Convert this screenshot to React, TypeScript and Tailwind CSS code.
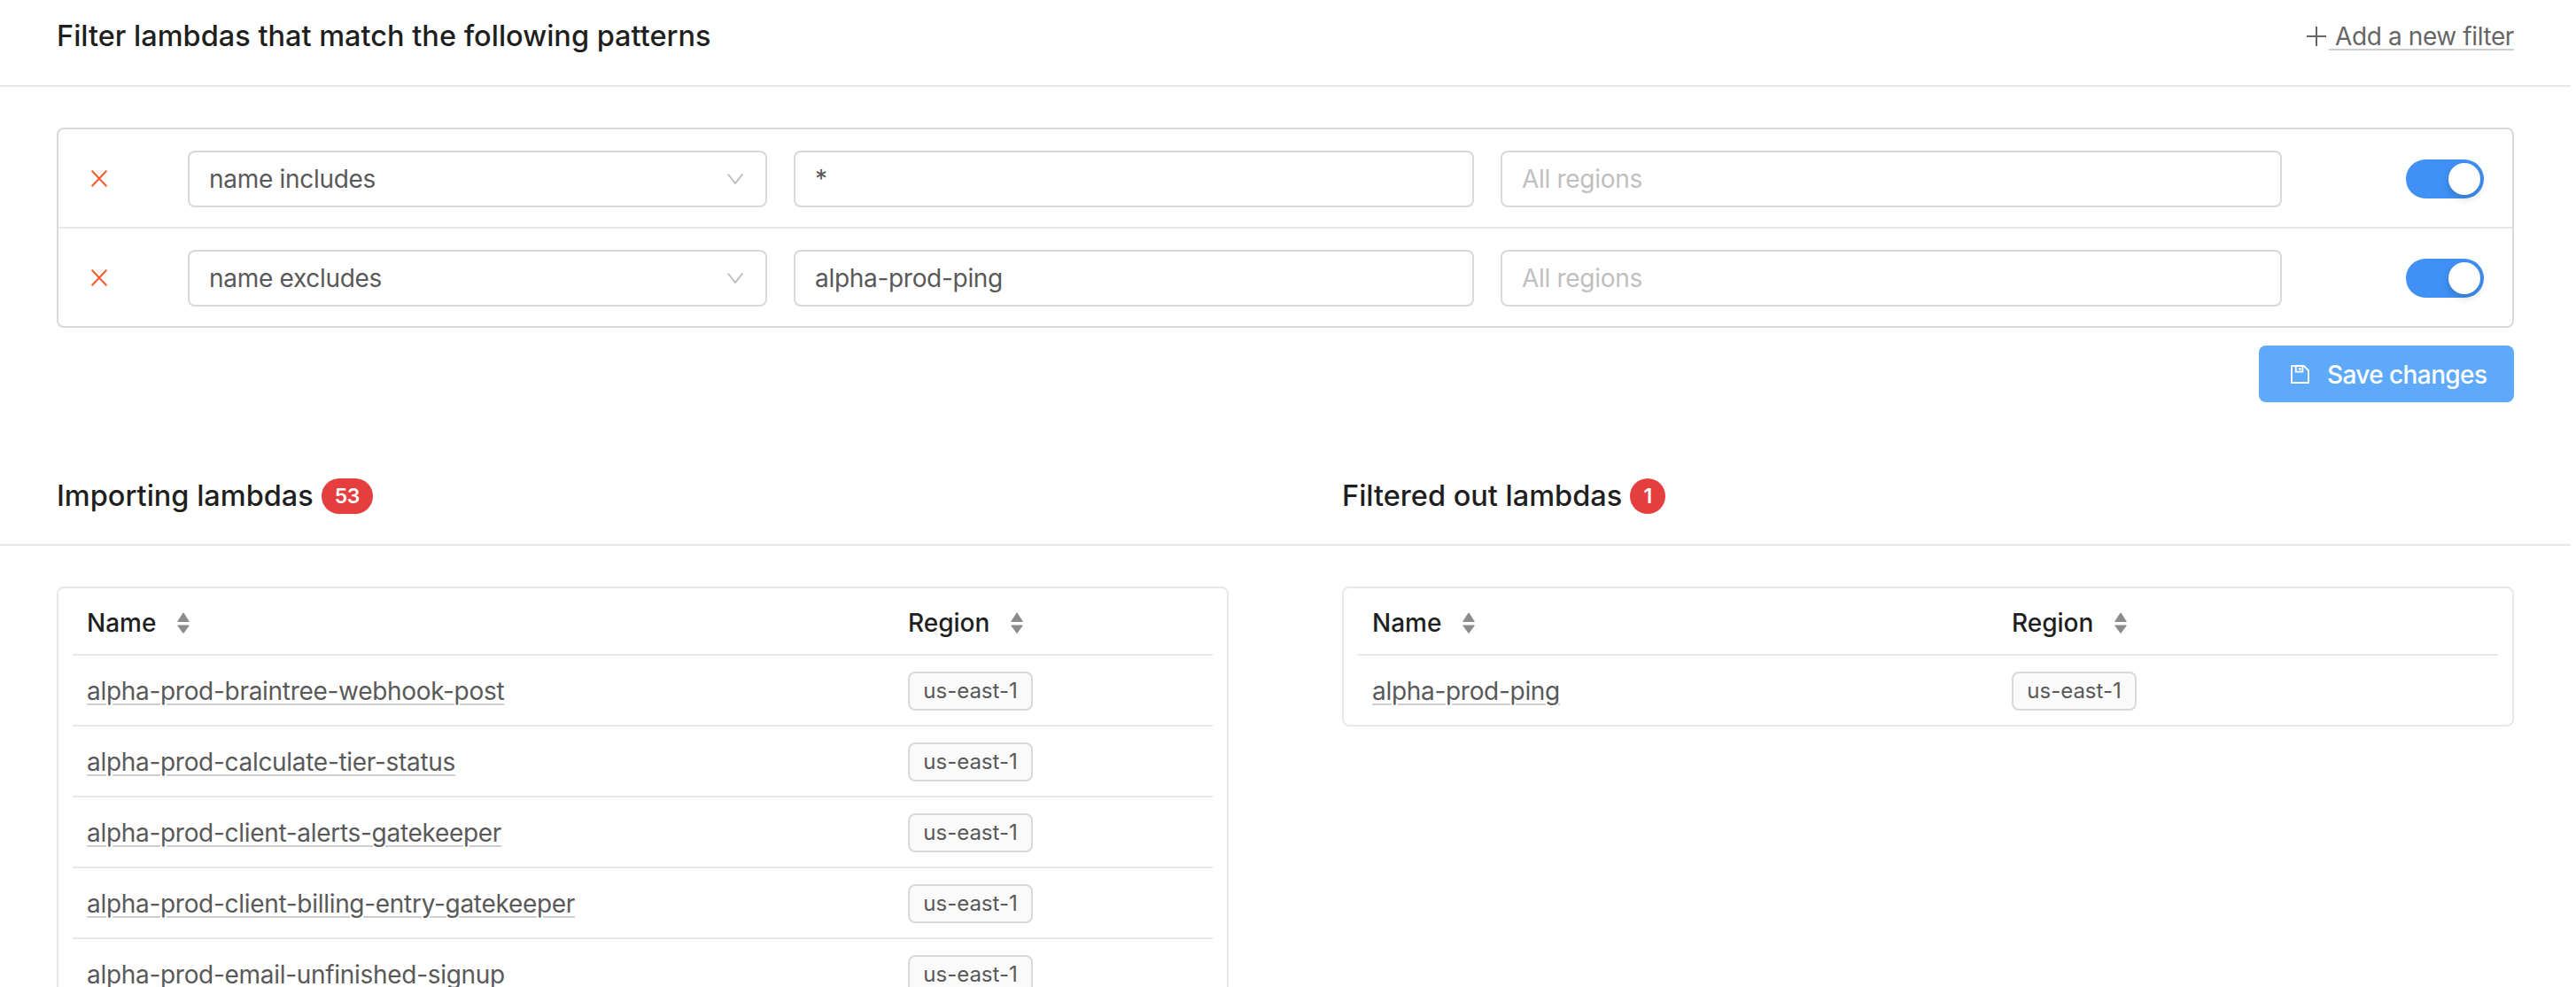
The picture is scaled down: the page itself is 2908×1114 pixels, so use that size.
import React from "react";

const PlusIcon = () => (
  <svg width="22" height="22" viewBox="0 0 22 22" className="mr-[3px]">
    <path d="M11 0V22M0 11H22" stroke="#666666" strokeWidth="2" fill="none" />
  </svg>
);

const CloseIcon = () => (
  <svg width="18" height="19" viewBox="0 0 18 19" className="-mt-[1px]">
    <path d="M0.7 0.7L17.3 18.3M17.3 0.7L0.7 18.3" stroke="#f2592c" strokeWidth="2" fill="none" />
  </svg>
);

const Chevron = () => (
  <svg width="18" height="12" viewBox="0 0 18 12">
    <path d="M0.8 0.5L9 11L17.2 0.5" stroke="#bfbfbf" strokeWidth="2" fill="none" />
  </svg>
);

const SaveIcon = () => (
  <svg width="21" height="21" viewBox="0 0 22 22" fill="none">
    <path d="M1 1H15.5L21 6.5V21H1V1Z" stroke="#ffffff" strokeWidth="2" strokeLinejoin="round" />
    <path d="M6 1.5V8H14V1.5" stroke="#ffffff" strokeWidth="2" />
    <rect x="9.5" y="3" width="2.5" height="3" fill="#ffffff" />
  </svg>
);

const SortIcon = () => (
  <svg width="14" height="24" viewBox="0 0 14 24">
    <path d="M7 0.8L13.3 10.5H0.7L7 0.8Z" fill="#8c8c8c" stroke="#8c8c8c" strokeWidth="1" strokeLinejoin="round" />
    <path d="M0.7 15H13.3L7 23.5L0.7 15Z" fill="#8c8c8c" stroke="#8c8c8c" strokeWidth="1" strokeLinejoin="round" />
  </svg>
);

const Toggle = () => (
  <div className="ml-auto mr-[32px] flex h-[44px] w-[88px] items-center justify-end rounded-full bg-[#4090f5] pr-[4px]">
    <div className="h-[36px] w-[36px] rounded-full bg-white shadow-[0_4px_8px_rgba(0,35,11,0.2)]" />
  </div>
);

const FilterRow = ({ select, value }: { select: string; value: string }) => (
  <div className="flex h-[110px] items-center pt-[2px]">
    <div className="flex w-[146px] shrink-0 pl-[37px]">
      <CloseIcon />
    </div>
    <div className="flex h-[64px] w-[654px] shrink-0 items-center justify-between rounded-[8px] border-2 border-[#d9d9d9] pl-[22px] pr-[25px] text-[28px] tracking-[-0.3px] text-[#595959]">
      <span>{select}</span>
      <Chevron />
    </div>
    <div className="ml-[30px] flex h-[64px] w-[768px] shrink-0 items-center rounded-[8px] border-2 border-[#d9d9d9] pl-[22px] text-[28px] tracking-[-0.3px] text-[#595959]">
      {value}
    </div>
    <div className="ml-[30px] flex h-[64px] w-[882px] shrink-0 items-center rounded-[8px] border-2 border-[#d9d9d9] pl-[22px] text-[28px] tracking-[-0.3px] text-[#bfbfbf]">
      All regions
    </div>
    <Toggle />
  </div>
);

const Badge = ({ children, wide }: { children: React.ReactNode; wide?: boolean }) => (
  <span
    className={`ml-[9px] flex h-[40px] items-center justify-center rounded-full bg-[#e53e3e] text-[23px] font-semibold tracking-[-0.5px] text-white ${wide ? "w-[58px]" : "w-[40px]"}`}
  >
    {children}
  </span>
);

const SectionTitle = ({ title, count, wide }: { title: string; count: string; wide?: boolean }) => (
  <div className="flex items-center text-[32.5px] font-medium text-[#1f1f1f]">
    <span>{title}</span>
    <Badge wide={wide}>{count}</Badge>
  </div>
);

const HeaderCell = ({ label }: { label: string }) => (
  <div className="flex items-center gap-[24px] px-[16px] text-[28px] font-medium text-[#1f1f1f]">
    <span>{label}</span>
    <SortIcon />
  </div>
);

const LambdaRow = ({ name, cols }: { name: string; cols: string }) => (
  <div className={`grid h-[80px] items-center border-t-2 border-[#e8e8e8] pt-[2px] ${cols}`}>
    <div className="px-[16px]">
      <a className="text-[28px] leading-[36px] tracking-[-0.3px] text-[#595959] underline decoration-[#cfcfcf] decoration-2 underline-offset-[4px]">
        {name}
      </a>
    </div>
    <div className="flex px-[16px]">
      <span className="inline-flex h-[44px] w-[141px] items-center justify-center rounded-[8px] border-2 border-[#d9d9d9] bg-[#fafafa] text-[24px] text-[#595959]">
        us-east-1
      </span>
    </div>
  </div>
);

const LambdaTable = ({ names, cols }: { names: string[]; cols: string }) => (
  <div className="rounded-[8px] border-2 border-[#e8e8e8] px-[16px]">
    <div className={`grid h-[74px] items-center pt-[4px] ${cols}`}>
      <HeaderCell label="Name" />
      <HeaderCell label="Region" />
    </div>
    {names.map((n) => (
      <LambdaRow key={n} name={n} cols={cols} />
    ))}
  </div>
);

export default function App() {
  return (
    <div className="h-[1114px] w-[2902px] overflow-hidden bg-white font-['Inter',sans-serif]">
      <header className="flex h-[98px] items-center justify-between border-b-2 border-[#e8e8e8] px-[64px] pb-[14px]">
        <h1 className="text-[32.5px] font-medium text-[#1f1f1f]">Filter lambdas that match the following patterns</h1>
        <a className="flex items-center text-[28px] tracking-[-0.4px] text-[#666666]">
          <PlusIcon />
          <span className="whitespace-pre leading-[36px] underline decoration-[#cfcfcf] decoration-2 underline-offset-[4px]">
            {" Add a new filter"}
          </span>
        </a>
      </header>

      <section className="px-[64px] pt-[46px]">
        <div className="rounded-[8px] border-2 border-[#d9d9d9]">
          <FilterRow select="name includes" value="*" />
          <div className="h-[2px] bg-[#e8e8e8]" />
          <FilterRow select="name excludes" value="alpha-prod-ping" />
        </div>
        <div className="mt-[20px] flex justify-end">
          <button className="flex h-[64px] w-[288px] items-center gap-[20px] rounded-[8px] bg-[#5ea9f9] pl-[36px] text-[28px] font-medium tracking-[-0.6px] text-white">
            <SaveIcon />
            <span className="pt-[2px]">Save changes</span>
          </button>
        </div>
      </section>

      <div className="mt-[72px] grid h-[90px] grid-cols-2 items-center gap-x-[128px] border-b-2 border-[#e8e8e8] px-[64px] pb-[20px]">
        <SectionTitle title="Importing lambdas" count="53" wide />
        <SectionTitle title="Filtered out lambdas" count="1" />
      </div>

      <div className="grid grid-cols-2 items-start gap-x-[128px] px-[64px] pt-[46px]">
        <LambdaTable
          cols="grid-cols-[927px_1fr]"
          names={[
            "alpha-prod-braintree-webhook-post",
            "alpha-prod-calculate-tier-status",
            "alpha-prod-client-alerts-gatekeeper",
            "alpha-prod-client-billing-entry-gatekeeper",
            "alpha-prod-email-unfinished-signup",
          ]}
        />
        <LambdaTable cols="grid-cols-[722px_1fr]" names={["alpha-prod-ping"]} />
      </div>
    </div>
  );
}
